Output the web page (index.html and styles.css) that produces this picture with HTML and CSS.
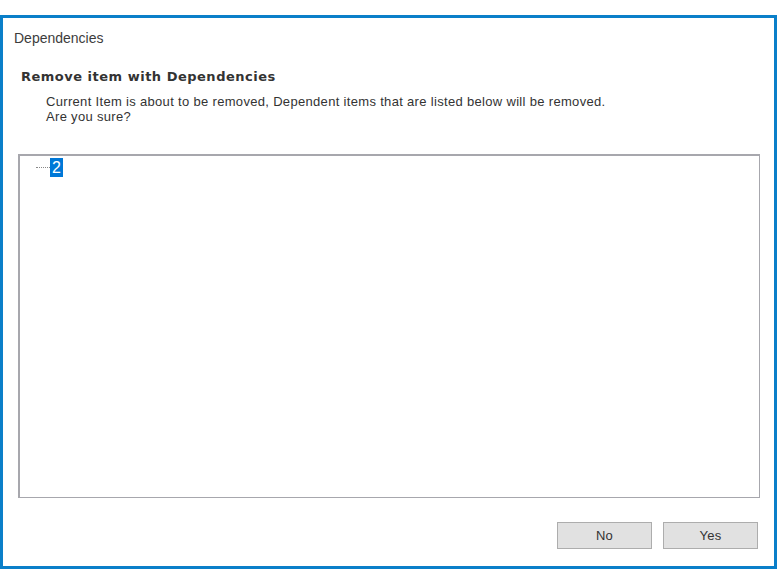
FILE: index.html
```html
<!DOCTYPE html>
<html>
<head>
<meta charset="utf-8">
<link rel="stylesheet" href="styles.css">
</head>
<body>
<div class="frame">
  <div class="caption">Dependencies</div>
  <div class="heading">Remove item with Dependencies</div>
  <div class="desc">Current Item is about to be removed, Dependent items that are listed below will be removed.<br>Are you sure?</div>
  <div class="list">
    <div class="node"><span class="dots"></span><span class="sel">2</span></div>
  </div>
  <div class="buttons">
    <button class="btn">No</button>
    <button class="btn">Yes</button>
  </div>
</div>
</body>
</html>
```
FILE: styles.css
```css
html, body { margin: 0; padding: 0; background: #fff; }
body { width: 778px; height: 569px; padding-top: 15px; box-sizing: border-box; font-family: "Liberation Sans", Arial, sans-serif; }
.frame {
  width: 777px; height: 554px; box-sizing: border-box;
  border: 3px solid #0a7fc9;
  display: flex; flex-direction: column;
  color: #333;
}
.caption { font-size: 14px; margin: 12px 0 0 11px; line-height: 16px; color: #3c3c3c; }
.heading { font-family: "DejaVu Sans", Verdana, sans-serif; font-weight: bold; font-size: 13px; letter-spacing: 0.5px; margin: 23px 0 0 18px; line-height: 16px; color: #333; }
.desc { font-size: 13px; letter-spacing: 0.32px; margin: 9px 0 0 43px; line-height: 15px; color: #333; }
.list {
  margin: 30px 0 0 15px; width: 742px; height: 344px; box-sizing: border-box;
  border: 1px solid #a7a7ad; border-top-width: 2px; border-left-width: 2px;
  padding: 1px 0 0 16px;
}
.node { display: flex; align-items: center; height: 20px; }
.dots { width: 14px; border-top: 1px dotted #888; }
.sel { background: #0078d7; color: #fff; font-size: 16px; padding: 0 2px; line-height: 19px; height: 19px; }
.buttons { display: flex; justify-content: flex-end; gap: 11px; margin: 24px 16px 0 0; }
.btn {
  width: 95px; height: 27px; background: #e1e1e1; border: 1px solid #adadad;
  font-family: "Liberation Sans", Arial, sans-serif; font-size: 13px; letter-spacing: 0.3px; color: #333; padding: 0;
}
```
